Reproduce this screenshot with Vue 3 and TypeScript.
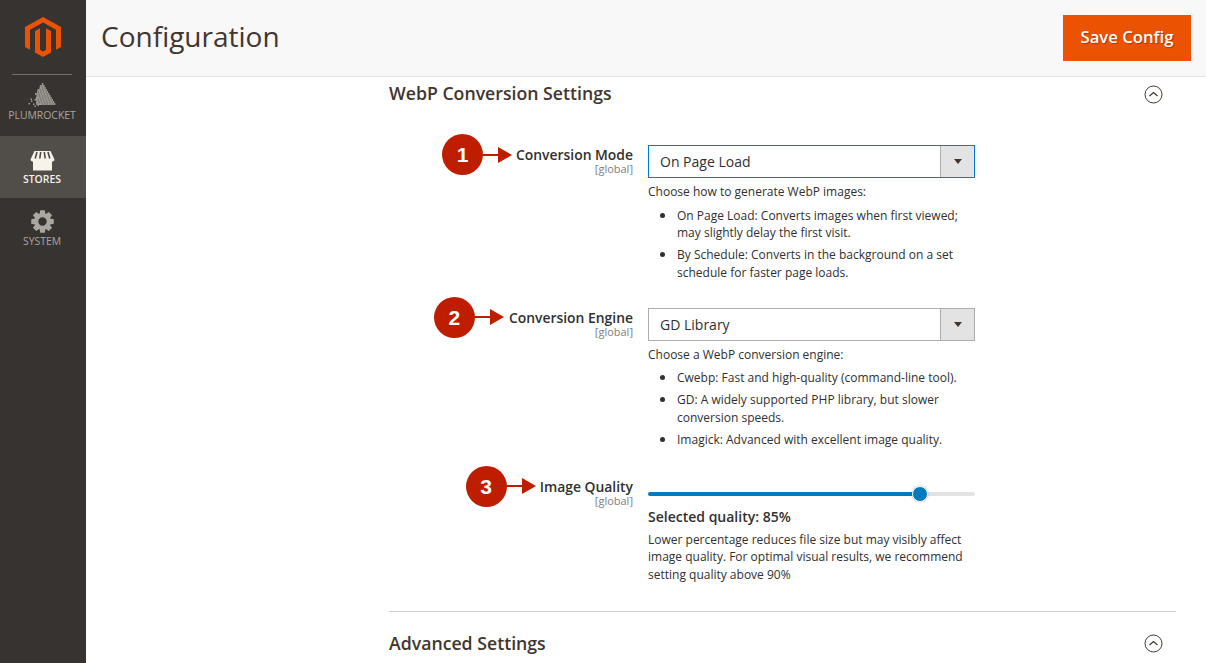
<script setup lang="ts">
interface NavItem { label: string; active?: boolean; kind: string }
const nav: NavItem[] = [
  { label: 'PLUMROCKET', kind: 'rocket' },
  { label: 'STORES', kind: 'store', active: true },
  { label: 'SYSTEM', kind: 'gear' },
]

// Particles of the rocket mark: a dense triangle that dissolves to the lower left
const dots: number[][] = []
for (let r = 0; r < 11; r++) {
  const half = (r + 0.5) * 1.2
  const cx = 14
  for (let x = cx + half; x >= cx - half; x -= 1.6) {
    if (r > 5 && x < cx - half + (r - 5) * 1.3) continue
    dots.push([x, 1 + r * 2])
  }
}
const loose: number[][] = [[0.5, 20], [3, 17.5], [5, 20.5], [6.5, 16], [2.5, 15.5], [8, 19], [9.5, 21.5], [6.5, 22.5], [11.5, 20.5], [8.5, 14]]

function gearPath(): string {
  const parts: string[] = []
  const c = 11.5
  const teeth = 8
  for (let i = 0; i < teeth; i++) {
    const a = (i * Math.PI * 2) / teeth - Math.PI / 2
    const pts: [number, number][] = [
      [8.2, -0.36], [11.5, -0.2], [11.5, 0.2], [8.2, 0.36],
    ]
    for (const [r, d] of pts) {
      const x = (c + r * Math.cos(a + d)).toFixed(2)
      const y = (c + r * Math.sin(a + d)).toFixed(2)
      parts.push(`${parts.length ? 'L' : 'M'}${x} ${y}`)
    }
  }
  parts.push('Z')
  parts.push(`M${c - 4.2} ${c}a4.2 4.2 0 1 0 8.4 0a4.2 4.2 0 1 0-8.400 0Z`)
  return parts.join('')
}
const gear = gearPath()
</script>

<template>
  <div class="page">
    <aside class="side">
      <div class="logo">
        <svg width="36" height="40" viewBox="0 0 36 42" preserveAspectRatio="none">
          <path fill="#eb5202" d="M18 0 36 10.400V31.500L31 34.400V13.300L18 5.800 5 13.300V34.400L0 31.500V10.400Z" />
          <path fill="#eb5202" d="M18 42 10 37.400V14.600L15 11.800V34.500L18 36.200 21 34.500V11.800L26 14.600V37.400Z" />
        </svg>
      </div>
      <nav class="nav">
        <div v-for="item in nav" :key="item.label" class="nav-item" :class="[item.kind, { active: item.active }]">
          <svg v-if="item.kind === 'rocket'" width="28" height="24" viewBox="0 0 28 24">
            <rect v-for="(d, i) in dots" :key="i" :x="d[0] - 0.75" :y="d[1] - 0.8" width="1.500" height="1.600" fill="#b3afa9" />
            <rect v-for="(d, i) in loose" :key="'l' + i" :x="d[0]" :y="d[1]" width="1.400" height="1.400" fill="#aaa6a0" />
          </svg>
          <svg v-else-if="item.kind === 'store'" width="25" height="20" viewBox="0 0 25 20">
            <path fill="#f7f3eb" d="M4.500 0H20.500L24.500 8.500C24.500 10 23 10.500 22 10.500V19.500H3V10.500C2 10.500.5 10 .5 8.500Z" />
            <path stroke="#4f4a46" stroke-width="1.600" fill="none" d="M7 1 5.200 7.500M10.700 1 9.800 7.500M14.300 1 15.200 7.500M18 1 19.800 7.500" />
          </svg>
          <svg v-else width="23" height="23" viewBox="0 0 23 23">
            <path fill="#aaa6a0" fill-rule="evenodd" :d="gear" />
          </svg>
          <span>{{ item.label }}</span>
        </div>
      </nav>
    </aside>

    <div class="main">
      <header class="head">
        <h1>Configuration</h1>
        <button class="save" type="button">Save Config</button>
      </header>

      <div class="content">
        <section class="section first-sec">
          <div class="sec-title">
            <h2>WebP Conversion Settings</h2>
            <span class="toggle"><svg width="19" height="19" viewBox="0 0 19 19"><circle cx="9.500" cy="9.500" r="8.500" fill="none" stroke="#41362f" /><path d="M5.500 11 9.500 7.500 13.500 11" fill="none" stroke="#41362f" stroke-width="1.200" /></svg></span>
          </div>

          <div class="row r1">
            <div class="label">
              <span class="callout"><b class="badge">1</b><i class="shaft"></i><i class="head-arrow"></i></span>
              <div class="lab-text"><strong>Conversion Mode</strong><small>[global]</small></div>
            </div>
            <div class="field">
              <div class="select focus"><span>On Page Load</span><i class="caret-box"><i class="caret"></i></i></div>
              <div class="note">
                <p>Choose how to generate WebP images:</p>
                <ul>
                  <li>On Page Load: Converts images when first viewed; may slightly delay the first visit.</li>
                  <li>By Schedule: Converts in the background on a set schedule for faster page loads.</li>
                </ul>
              </div>
            </div>
          </div>

          <div class="row r2">
            <div class="label">
              <span class="callout"><b class="badge">2</b><i class="shaft"></i><i class="head-arrow"></i></span>
              <div class="lab-text"><strong>Conversion Engine</strong><small>[global]</small></div>
            </div>
            <div class="field">
              <div class="select"><span>GD Library</span><i class="caret-box"><i class="caret"></i></i></div>
              <div class="note">
                <p>Choose a WebP conversion engine:</p>
                <ul>
                  <li>Cwebp: Fast and high-quality (command-line tool).</li>
                  <li>GD: A widely supported PHP library, but slower conversion speeds.</li>
                  <li>Imagick: Advanced with excellent image quality.</li>
                </ul>
              </div>
            </div>
          </div>

          <div class="row r3">
            <div class="label">
              <span class="callout"><b class="badge">3</b><i class="shaft"></i><i class="head-arrow"></i></span>
              <div class="lab-text"><strong>Image Quality</strong><small>[global]</small></div>
            </div>
            <div class="field">
              <div class="slider"><i class="fill"></i><i class="thumb"></i></div>
              <div class="selected">Selected quality: 85%</div>
              <div class="note quality">Lower percentage reduces file size but may visibly affect image quality. For optimal visual results, we recommend setting quality above 90%</div>
            </div>
          </div>
        </section>

        <section class="section second-sec">
          <div class="sec-title">
            <h2>Advanced Settings</h2>
            <span class="toggle"><svg width="19" height="19" viewBox="0 0 19 19"><circle cx="9.500" cy="9.500" r="8.500" fill="none" stroke="#41362f" /><path d="M5.500 11 9.500 7.500 13.500 11" fill="none" stroke="#41362f" stroke-width="1.200" /></svg></span>
          </div>
        </section>
      </div>
    </div>
  </div>
</template>

<style>
html, body { margin: 0; overflow: hidden; background: #fff; }
</style>

<style scoped>
.page { display: flex; width: 1206px; height: 663px; overflow: hidden; font-family: "Open Sans", sans-serif; color: #303030; }
.side { width: 86px; flex: none; background: #373330; }
.logo { height: 75px; box-sizing: border-box; padding-top: 17px; display: flex; justify-content: center; position: relative; }
.logo svg { height: 40px; }
.logo::after { content: ""; position: absolute; left: 12px; right: 14px; bottom: 0; height: 1px; background: #736e6a; }
.nav-item { height: 62px; display: flex; flex-direction: column; align-items: center; box-sizing: border-box; padding: 12px 2px 0 0; color: #aaa6a0; font-size: 10.400px; line-height: 14px; }
.nav-item svg { display: block; flex: none; }
.nav-item span { margin-top: 2px; }
.nav-item.rocket { height: 61px; padding-top: 8px; }
.nav-item.rocket span { margin-top: 1px; }
.nav-item.store svg { margin-top: 3px; margin-bottom: -1px; }
.nav-item.gear span { margin-top: 1px; }
.nav-item.active { background: #514d49; color: #f7f3eb; font-weight: 600; }
.main { flex: 1; min-width: 0; }
.head { height: 77px; box-sizing: border-box; background: #f8f8f8; border-bottom: 1px solid #e3e3e3; display: flex; align-items: center; justify-content: space-between; padding: 0 15px; }
h1 { margin: 0 0 5px; font-size: 28px; font-weight: 400; color: #41362f; line-height: 36px; }
.save { width: 128px; height: 46px; margin-bottom: 1px; border: 0; background: #eb5202; color: #fff; font: 600 16.700px/42px "Open Sans", sans-serif; text-shadow: 1px 1px 1px rgba(0, 0, 0, .3); padding: 0 0 2px; }
.content { padding: 0 30px 0 303px; }
.sec-title { display: flex; justify-content: space-between; align-items: center; height: 32px; }
h2 { margin: 0; font-size: 17.700px; line-height: 24px; font-weight: 600; color: #41362f; }
.toggle { display: block; height: 19px; margin-right: 13px; margin-top: 1px; }
.first-sec .toggle { margin-top: 3px; }
.first-sec { border-bottom: 1px solid #ccc; height: 534px; box-sizing: content-box; }
.second-sec .sec-title { margin-top: 15px; }
.row { display: grid; grid-template-columns: 244px 328px; column-gap: 15px; }
.field { width: 327px; }
.r1 { margin-top: 37px; }
.r2 { margin-top: 23px; }
.r3 { margin-top: 25px; }
.label { display: flex; justify-content: flex-end; }
.callout { display: flex; align-items: center; height: 41px; margin-top: -12px; margin-right: 4px; }
.r2 .callout { margin-right: 5px; }
.badge { width: 41px; height: 41px; border-radius: 50%; background: #bf1d00; color: #fff; font: 700 21px/41px "Liberation Sans", sans-serif; text-align: center; }
.shaft { width: 15px; height: 2px; background: #bf1d00; }
.head-arrow { width: 0; height: 0; border-left: 14px solid #bf1d00; border-top: 8.500px solid transparent; border-bottom: 8.500px solid transparent; }
.lab-text strong { display: block; font-size: 13.900px; line-height: 18px; font-weight: 600; color: #303030; }
.lab-text small { display: block; font-size: 11px; line-height: 9px; color: #808080; text-align: right; }
.select { height: 33px; box-sizing: border-box; border: 1px solid #adadad; display: flex; align-items: center; justify-content: space-between; font-size: 14px; padding-left: 11px; margin-top: -1px; }
.select.focus { border-color: #007bdb; }
.caret-box { width: 33px; height: 100%; background: #e3e3e3; border-left: 1px solid #adadad; display: flex; align-items: center; justify-content: center; }
.caret { width: 0; height: 0; border-top: 5px solid #41362f; border-left: 4.500px solid transparent; border-right: 4.500px solid transparent; }
.note { font-size: 12px; line-height: 17.600px; color: #303030; margin-top: 5px; }
.note p { margin: 0; }
.note ul { margin: 6px 0 0; padding: 0 0 0 29px; list-style: none; }
.note li { margin-bottom: 4.400px; position: relative; }
.note li::before { content: ""; position: absolute; left: -17.500px; top: 6px; width: 5px; height: 5px; border-radius: 50%; background: #303030; }
.slider { height: 4px; background: #e3e3e3; border-radius: 2px; position: relative; margin-top: 14px; }
.fill { display: block; width: 272px; height: 4px; background: #007bbf; border-radius: 2px; }
.thumb { position: absolute; left: 264px; top: -6px; width: 16px; height: 16px; box-sizing: border-box; border-radius: 50%; background: #007bbf; border: 1px solid #fff; box-shadow: 0 0 2px rgba(0, 0, 0, .3); }
.selected { font-size: 14px; line-height: 20px; font-weight: 600; margin-top: 11px; }
.quality { margin-top: 4px; }
</style>
